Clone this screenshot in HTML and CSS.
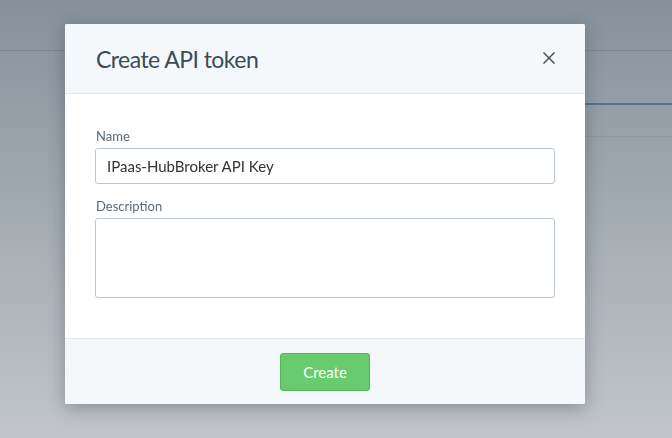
FILE: index.html
```html
<!DOCTYPE html>
<html>
<head>
<meta charset="utf-8">
<link rel="stylesheet" href="styles.css">
</head>
<body>
<div class="page">
  <div class="topbar"></div>
  <div class="content">
    <div class="tabs"></div>
    <div class="subrow"></div>
  </div>
</div>
<div class="overlay">
  <div class="modal">
    <div class="modal-header">
      <h2 class="modal-title">Create API token</h2>
      <button class="close" aria-label="Close">
        <svg width="12" height="12" viewBox="0 0 12 12"><path d="M0.5 0.5L11.5 11.5M11.5 0.5L0.5 11.5" stroke="#3b4a57" stroke-width="1.4" fill="none"/></svg>
      </button>
    </div>
    <div class="modal-body">
      <label class="field-label">Name</label>
      <input class="input" type="text" value="IPaas-HubBroker API Key">
      <label class="field-label second">Description</label>
      <textarea class="textarea"></textarea>
    </div>
    <div class="modal-footer">
      <button class="btn-create">Create</button>
    </div>
  </div>
</div>
</body>
</html>
```
FILE: styles.css
```css
html, body {
  margin: 0;
  padding: 0;
  height: 100%;
}
body {
  font-family: Lato, "Open Sans", sans-serif;
  background: linear-gradient(180deg, #86919a 0%, #a4acb2 50%, #c1c5c9 100%);
  overflow: hidden;
}
.page {
  height: 438px;
}
.topbar {
  height: 50px;
  border-bottom: 1px solid #7c878f;
}
.content {
  margin-left: 400px;
}
.tabs {
  height: 52px;
  border-bottom: 2px solid #4b7598;
}
.subrow {
  height: 31px;
  border-bottom: 1px solid #8f999f;
}
.overlay {
  position: fixed;
  inset: 0;
}
.modal {
  position: absolute;
  left: 65px;
  top: 24px;
  width: 520px;
  background: #fff;
  border-radius: 2px;
  box-shadow: 0 4px 18px rgba(40, 50, 60, 0.35);
  overflow: hidden;
}
.modal-header {
  height: 69px;
  background: #f5f8fb;
  border-bottom: 1px solid #e2e8ee;
  display: flex;
  align-items: center;
  justify-content: space-between;
  padding: 0 30px 0 31px;
}
.modal-title {
  margin: 0;
  font-weight: 400;
  font-size: 23px;
  color: #3a4b59;
  letter-spacing: -0.55px;
}
.close {
  border: 0;
  background: none;
  padding: 0;
  width: 12px;
  height: 13px;
  display: flex;
}
.modal-body {
  padding: 34px 30px 40px 30px;
  display: flex;
  flex-direction: column;
}
.field-label {
  font-size: 13px;
  color: #5b6b78;
  line-height: 16px;
  margin-bottom: 4px;
  padding-left: 1px;
}
.field-label.second {
  margin-top: 14px;
}
.input {
  box-sizing: border-box;
  height: 36px;
  width: 460px;
  border: 1px solid #b9c7d1;
  border-radius: 3px;
  padding: 0 11px;
  font-family: Lato, sans-serif;
  font-size: 15px;
  color: #333;
  outline: none;
}
.textarea {
  box-sizing: border-box;
  height: 80px;
  width: 460px;
  border: 1px solid #b9c7d1;
  border-radius: 3px;
  resize: none;
  outline: none;
  font-family: Lato, sans-serif;
}
.modal-footer {
  height: 65px;
  background: #f5f8fb;
  border-top: 1px solid #e2e8ee;
  display: flex;
  align-items: center;
  justify-content: center;
}
.btn-create {
  width: 90px;
  height: 38px;
  background: #68cc6f;
  border: 1px solid #56b35c;
  border-radius: 3px;
  color: #fff;
  font-family: Lato, sans-serif;
  font-size: 15px;
  padding: 0;
}
```
